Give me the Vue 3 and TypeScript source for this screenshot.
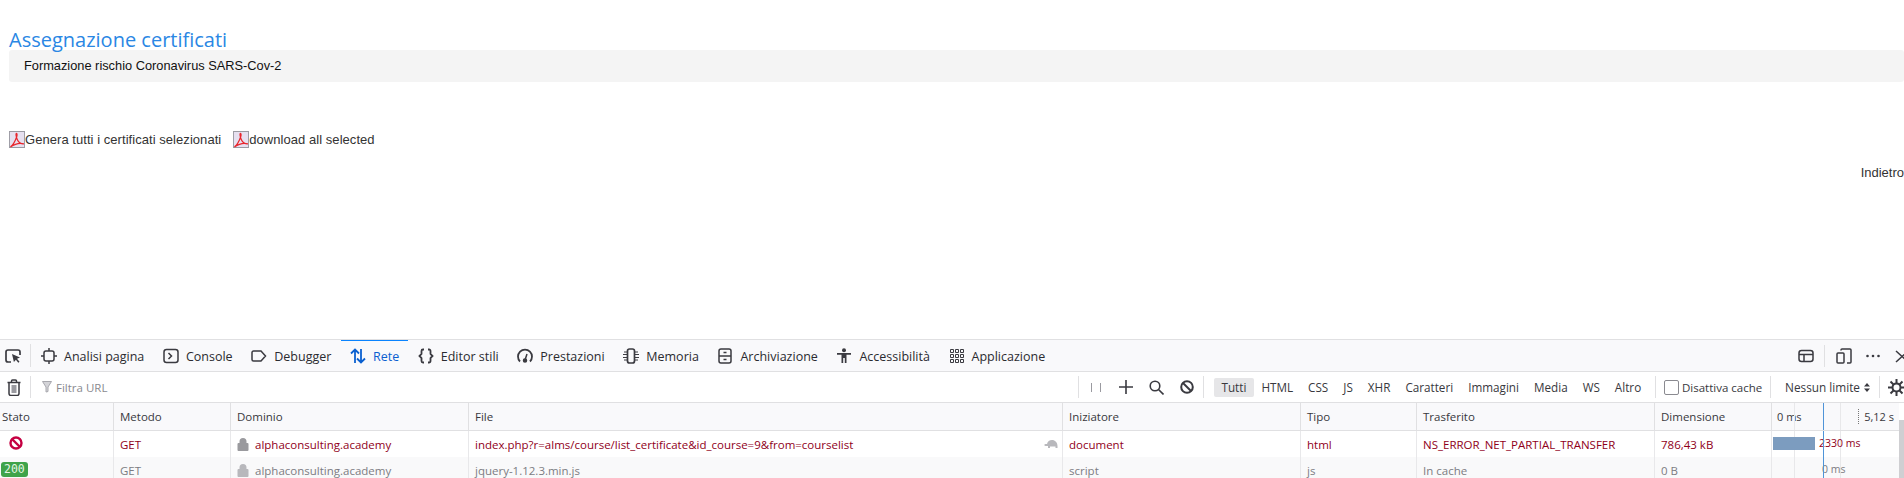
<template>
  <div class="page">
    <div class="content">
      <h1 class="title">Assegnazione certificati</h1>
      <div class="course">Formazione rischio Coronavirus SARS-Cov-2</div>
      <div class="actions">
        <a class="action" v-for="a in actions" :key="a">
          <svg class="pdf" width="16" height="17" viewBox="0 0 17 17" preserveAspectRatio="none">
            <rect x="0.5" y="0.5" width="16" height="16" fill="#e6e0f0" stroke="#9a9aa2" />
            <path d="M8 2.5c-.9 0-.7 2.6.8 6 1.2 2.6 3 4.6 7 4.4-3.6-1.2-9-.4-14.300 3 3-2 5.500-7 6.800-10.500.4-1.300.4-2.900-.3-2.900z" fill="none" stroke="#e8262d" stroke-width="1.300" />
          </svg>{{ a }}
        </a>
      </div>
      <div class="back"><a>Indietro</a></div>
    </div>

    <div class="devtools">
      <div class="tabbar">
        <div class="picker">
          <svg width="16" height="16" viewBox="0 0 16 16" fill="none" stroke="#3a3a40" stroke-width="1.700">
            <path d="M6 14H3a2 2 0 0 1-2-2V4a2 2 0 0 1 2-2h10a2 2 0 0 1 2 2v3" />
            <path d="M7 6l8 3.500-3 1.200 2.500 3-1.200 1-2.400-3-2 2.300z" fill="#3a3a40" stroke="none" />
          </svg>
        </div>
        <div class="tabs">
          <div v-for="t in tabs" :key="t.label" class="tab" :class="{ active: t.active }">
            <svg width="16" height="16" viewBox="0 0 16 16" fill="none" stroke="currentColor" stroke-width="1.500" v-html="t.icon"></svg>
            <span>{{ t.label }}</span>
          </div>
        </div>
        <div class="tabbar-right">
          <svg width="16" height="16" viewBox="0 0 16 16" fill="none" stroke="#3a3a40" stroke-width="1.500">
            <rect x="1" y="2.500" width="14" height="11" rx="2.500" />
            <path d="M1 6.500h14M6 6.500v7" />
          </svg>
          <span class="vsep"></span>
          <svg class="split" width="16" height="16" viewBox="0 0 16 16" fill="none" stroke="#3a3a40" stroke-width="1.500">
            <rect x="1" y="5" width="7" height="10" rx="1" />
            <path d="M5 2.500V2a1 1 0 0 1 1-1h8a1 1 0 0 1 1 1v12a1 1 0 0 1-1 1h-3" />
          </svg>
          <svg class="dots" width="16" height="16" viewBox="0 0 16 16" fill="#3a3a40">
            <circle cx="2.500" cy="8" r="1.300" /><circle cx="8" cy="8" r="1.300" /><circle cx="13.500" cy="8" r="1.300" />
          </svg>
          <svg class="close" width="14" height="14" viewBox="0 0 14 14" stroke="#3a3a40" stroke-width="1.500">
            <path d="M1 2l12 11M13 2L1 13" />
          </svg>
        </div>
      </div>

      <div class="toolbar">
        <div class="trash">
          <svg width="16" height="17" viewBox="0 0 16 17" fill="none" stroke="#3a3a40" stroke-width="1.500">
            <path d="M1.500 3.500h13M5.500 3.500V2a1 1 0 0 1 1-1h3a1 1 0 0 1 1 1v1.500" />
            <path d="M3 3.500v11a2 2 0 0 0 2 2h6a2 2 0 0 0 2-2v-11" />
            <rect x="5.500" y="6" width="5" height="8" fill="#9a9aa0" stroke="none" />
          </svg>
        </div>
        <div class="filter">
          <svg width="10" height="12" viewBox="0 0 10 12" fill="none" stroke="#a8a8ae" stroke-width="1">
            <path d="M.5 .500h9L6 6v4.500L4 11V6z" fill="#d4d4d8" />
          </svg>
          <span>Filtra URL</span>
        </div>
        <div class="tools">
          <span class="pause"></span>
          <svg class="plus" width="14" height="14" viewBox="0 0 14 14" stroke="#3a3a40" stroke-width="1.600"><path d="M7 0v14M0 7h14" /></svg>
          <svg width="15" height="15" viewBox="0 0 15 15" fill="none" stroke="#3a3a40" stroke-width="1.600">
            <circle cx="6" cy="6" r="4.800" /><path d="M9.500 9.500L14.500 14.500" />
          </svg>
          <svg width="14" height="14" viewBox="0 0 14 14" fill="none" stroke="#3a3a40" stroke-width="2">
            <circle cx="7" cy="7" r="5.800" /><path d="M3 3l8 8" />
          </svg>
        </div>
        <div class="types">
          <span v-for="(t, i) in types" :key="t" class="type" :class="{ on: i === 0 }">{{ t }}</span>
        </div>
        <label class="cache"><span class="box"></span>Disattiva cache</label>
        <div class="throttle">
          <span>Nessun limite</span>
          <svg width="6" height="9" viewBox="0 0 6 9" fill="#3a3a40"><path d="M3 0l3 3.500H0zM3 9L0 5.500h6z" /></svg>
        </div>
        <div class="gear">
          <svg width="17" height="17" viewBox="0 0 17 17" fill="none" stroke="#3a3a40">
            <circle cx="8.500" cy="8.500" r="4" stroke-width="2" />
            <path d="M8.500 0v4M8.500 13v4M0 8.500h4M13 8.500h4M2.500 2.500l3 3M11.500 11.500l3 3M14.500 2.500l-3 3M5.500 11.500l-3 3" stroke-width="2" />
          </svg>
        </div>
      </div>

      <div class="grid head">
        <div v-for="h in heads" :key="h" class="cell">{{ h }}</div>
        <div class="cell wf-head">
          <span>0 ms</span>
          <span class="tick"></span>
          <span class="tick second"></span>
          <span class="line"></span>
          <span class="wf-end">5,12 s</span>
        </div>
      </div>

      <div v-for="r in rows" :key="r.file" class="grid row" :class="r.cls">
        <div class="cell status">
          <svg v-if="r.blocked" class="blocked" width="14" height="14" viewBox="0 0 14 14" fill="none" stroke="#c50042" stroke-width="2.400">
            <circle cx="7" cy="7" r="5.500" /><path d="M3 3l8 8" />
          </svg>
          <span v-else class="code">200</span>
        </div>
        <div class="cell">GET</div>
        <div class="cell domain">
          <svg width="12" height="14" viewBox="0 0 12 14" :fill="r.lock">
            <path d="M2.500 6V4.500a3.500 3.500 0 0 1 7 0V6h1a1 1 0 0 1 1 1v6a1 1 0 0 1-1 1h-9a1 1 0 0 1-1-1V7a1 1 0 0 1 1-1z" />
          </svg>
          <span>alphaconsulting.academy</span>
        </div>
        <div class="cell file">
          <span>{{ r.file }}</span>
          <svg v-if="r.blocked" class="turtle" width="14" height="9" viewBox="0 0 14 9" fill="#b8b8bc">
            <path d="M4 8V6H1.500C0 6 0 4 1.500 4H3c.5-2.500 2.500-4 5-4 3 0 5.500 2.500 5.500 6v2h-2V6.500H6V8z" />
          </svg>
        </div>
        <div class="cell">{{ r.init }}</div>
        <div class="cell">{{ r.type }}</div>
        <div class="cell">{{ r.transfer }}</div>
        <div class="cell">{{ r.size }}</div>
        <div class="cell wf">
          <span class="tick"></span>
          <span class="tick second"></span>
          <span v-if="r.bar" class="bar" :style="{ width: r.bar + 'px' }"></span>
          <span class="time" :style="{ left: r.timeLeft + 'px' }">{{ r.time }}</span>
          <span class="line"></span>
        </div>
      </div>
      <div class="scrollbar"></div>
    </div>
  </div>
</template>

<script setup lang="ts">
const actions = ['Genera tutti i certificati selezionati', 'download all selected']

const tabs = [
  { label: 'Analisi pagina', icon: '<rect x="3" y="3" width="10" height="10" rx="2"/><path d="M8 0v3M8 13v3M0 8h3M13 8h3"/>' },
  { label: 'Console', icon: '<rect x="1" y="1.500" width="14" height="13" rx="2.500"/><path d="M5.500 5l3 3-3 3"/>' },
  { label: 'Debugger', icon: '<path d="M2.500 3h7.500l4.500 5-4.500 5H2.500a1.500 1.500 0 0 1-1.500-1.500v-7A1.500 1.500 0 0 1 2.500 3z"/>' },
  { label: 'Rete', active: true, icon: '<path stroke-width="1.800" d="M5 15V1.500M1 5.500l4-4 4 4M11 1v13.500M7 10.500l4 4 4-4"/>' },
  { label: 'Editor stili', icon: '<path stroke-width="1.800" d="M6 1.500H5a1.500 1.500 0 0 0-1.500 1.500v3L1.500 8l2 2v3A1.500 1.500 0 0 0 5 14.500h1M10 1.500h1A1.500 1.500 0 0 1 12.500 3v3l2 2-2 2v3a1.500 1.500 0 0 1-1.500 1.500h-1"/>' },
  { label: 'Prestazioni', icon: '<path stroke-width="1.800" d="M3 13.500A7 7 0 1 1 13 13.500"/><path d="M10 6l-2 6"/><circle cx="8" cy="12.500" r="1.500" fill="currentColor"/>' },
  { label: 'Memoria', icon: '<rect x="4.500" y="1" width="7" height="14" rx="2" stroke-width="1.700"/><path stroke-width="1" d="M1 4h3M0 6.500h4M0 9.500h4M1 12h3M12 4h3M12 6.500h4M12 9.500h4M12 12h3"/>' },
  { label: 'Archiviazione', icon: '<rect x="2" y="1" width="12" height="14" rx="2"/><path d="M2 8h12M6.500 4.500h3M6.500 11.500h3"/>' },
  { label: 'Accessibilità', icon: '<circle cx="8" cy="2.200" r="2" fill="currentColor" stroke="none"/><path fill="currentColor" stroke="none" d="M1 5h14v1.800h-4.500V15H8.800v-5H7.200v5H5.500V6.800H1z"/>' },
  { label: 'Applicazione', icon: '<path stroke-width="1" d="M1.500 1.500h3v3h-3zM6.500 1.500h3v3h-3zM11.500 1.500h3v3h-3zM1.500 6.500h3v3h-3zM6.500 6.500h3v3h-3zM11.500 6.500h3v3h-3zM1.500 11.500h3v3h-3zM6.500 11.500h3v3h-3zM11.500 11.500h3v3h-3z"/>' },
]

const types = ['Tutti', 'HTML', 'CSS', 'JS', 'XHR', 'Caratteri', 'Immagini', 'Media', 'WS', 'Altro']
const heads = ['Stato', 'Metodo', 'Dominio', 'File', 'Iniziatore', 'Tipo', 'Trasferito', 'Dimensione']

const rows = [
  {
    cls: 'error',
    blocked: true,
    lock: '#9a9a9e',
    file: 'index.php?r=alms/course/list_certificate&id_course=9&from=courselist',
    init: 'document',
    type: 'html',
    transfer: 'NS_ERROR_NET_PARTIAL_TRANSFER',
    size: '786,43 kB',
    bar: 42,
    timeLeft: 47,
    time: '2330 ms',
  },
  {
    cls: 'cached',
    blocked: false,
    lock: '#b8b8bc',
    file: 'jquery-1.12.3.min.js',
    init: 'script',
    type: 'js',
    transfer: 'In cache',
    size: '0 B',
    bar: 0,
    timeLeft: 50,
    time: '0 ms',
  },
]
</script>

<style scoped>
.page {
  width: 1904px;
  height: 478px;
  overflow: hidden;
  display: flex;
  flex-direction: column;
  background: #fff;
}
.content {
  height: 339px;
  flex: none;
  padding: 29px 0 0 9px;
  box-sizing: border-box;
  font-family: "Liberation Sans", Arial, sans-serif;
  font-size: 13px;
  color: #333;
}
.title {
  margin: 0;
  font-family: "Open Sans", sans-serif;
  font-size: 20px;
  font-weight: 400;
  line-height: 22px;
  color: #2a87e4;
}
.course {
  height: 32px;
  line-height: 32px;
  margin-top: -1px;
  padding-left: 15px;
  background: #f4f4f4;
  border-radius: 3px;
  color: #111;
  font-size: 12.800px;
}
.actions {
  display: flex;
  gap: 12px;
  margin-top: 49px;
  height: 17px;
}
.action {
  display: flex;
  align-items: center;
  letter-spacing: 0.05px;
}
.pdf {
  flex: none;
}
.back {
  margin-top: 17px;
  text-align: right;
}

.devtools {
  position: relative;
  flex: 1;
  overflow: hidden;
  border-top: 1px solid #e0e0e2;
  font-family: "Open Sans", "Noto Sans", sans-serif;
  font-size: 11.500px;
  color: #38383d;
  background: #fff;
}
.tabbar {
  display: flex;
  align-items: stretch;
  height: 31px;
  background: #f9f9fb;
  border-bottom: 1px solid #e0e0e2;
}
.picker {
  width: 31px;
  display: flex;
  align-items: center;
  justify-content: center;
  box-sizing: border-box;
  padding-right: 4px;
  border-right: 1px solid #e0e0e2;
  margin: 4px 0;
}
.tabs {
  display: flex;
  margin-left: 0.700px;
  font-size: 12.500px;
}
.tab {
  display: flex;
  align-items: center;
  gap: 7px;
  padding: 0 9.300px;
  color: #2b2b30;
  border-top: 2px solid transparent;
  margin-top: -1px;
}
.tab svg {
  flex: none;
  color: #3a3a40;
}
.tab.active {
  color: #0a60d0;
  border-top-color: #0a84ff;
}
.tab.active svg {
  color: #0a60d0;
}
.tabbar-right {
  margin-left: auto;
  margin-right: -5px;
  display: flex;
  align-items: center;
}
.vsep {
  width: 1px;
  height: 22px;
  margin-left: 10px;
  background: #e0e0e2;
}
.split {
  margin-left: 11px;
}
.dots {
  margin-left: 13px;
}
.close {
  margin-left: 14px;
}

.toolbar {
  display: flex;
  align-items: center;
  height: 30px;
  border-bottom: 1px solid #e0e0e2;
}
.trash {
  width: 31px;
  height: 22px;
  box-sizing: border-box;
  border-right: 1px solid #e0e0e2;
  padding-right: 3px;
  display: flex;
  align-items: center;
  justify-content: center;
}
.filter {
  flex: 1;
  display: flex;
  align-items: center;
  gap: 4px;
  padding-left: 11px;
  color: #8a8a90;
}
.tools {
  display: flex;
  align-items: center;
  gap: 16px;
  height: 22px;
  width: 126px;
  box-sizing: border-box;
  padding-left: 12px;
  border-left: 1px solid #e0e0e2;
  border-right: 1px solid #e0e0e2;
}
.pause {
  width: 8px;
  height: 9px;
  border-left: 1px solid #9a9aa0;
  border-right: 1px solid #9a9aa0;
}
.plus {
  margin-left: 2px;
}
.types {
  display: flex;
  align-items: center;
  width: 451px;
  padding-left: 10px;
  box-sizing: border-box;
}
.type {
  padding: 0 7.500px;
  height: 19px;
  line-height: 19px;
  border-radius: 2px;
  color: #38383d;
  font-size: 11.700px;
}
.type.on {
  background: #e6e6e8;
}
.cache {
  display: flex;
  align-items: center;
  gap: 3px;
  height: 22px;
  width: 115px;
  padding-left: 8px;
  box-sizing: border-box;
  border-left: 1px solid #e0e0e2;
  white-space: nowrap;
  font-size: 11.500px;
}
.box {
  width: 15px;
  height: 15px;
  box-sizing: border-box;
  border: 1px solid #8a8a90;
  border-radius: 2px;
  flex: none;
}
.throttle {
  display: flex;
  align-items: center;
  gap: 4px;
  width: 110px;
  height: 22px;
  box-sizing: border-box;
  padding-left: 14px;
  border-left: 1px solid #e0e0e2;
  border-right: 1px solid #e0e0e2;
  white-space: nowrap;
  font-size: 11.800px;
}
.gear {
  box-sizing: border-box;
  padding-left: 8px;
  width: 24px;
  overflow: hidden;
  display: flex;
}
.gear svg {
  flex: none;
}

.grid {
  display: grid;
  grid-template-columns: 114px 117px 238px 594px 238px 116px 238px 117px 127px;
  width: 1899px;
}
.cell {
  padding-left: 6px;
  white-space: nowrap;
  overflow: hidden;
  display: flex;
  align-items: center;
  box-sizing: border-box;
}
.head {
  height: 28px;
  background: #f9f9fb;
  border-bottom: 1px solid #e0e0e2;
  box-sizing: border-box;
}
.head .cell {
  border-right: 1px solid #e0e0e2;
}
.head .cell:first-child {
  padding-left: 2px;
}
.row {
  height: 26px;
}
.row.error {
  color: #90001a;
  background: #fff;
}
.row.cached {
  color: #7c7c82;
  background: #f9f9fa;
}
.row .cell {
  height: 100%;
  border-right: 1px solid #e8e8ea;
}
.row .status {
  padding-left: 2px;
}
.blocked {
  margin-left: 7px;
  margin-top: -3px;
}
.code {
  background: #3fa34a;
  color: #e4f5e4;
  border-radius: 3px;
  font-family: "DejaVu Sans Mono", monospace;
  font-size: 11.500px;
  line-height: 15px;
  padding: 0 3px;
  margin: -1px 0 0 -1px;
}
.domain {
  gap: 6px;
}
.file {
  position: relative;
}
.turtle {
  position: absolute;
  right: 4px;
  top: 9px;
}
.wf-head {
  position: relative;
  border-right: none !important;
  justify-content: flex-start;
  padding-left: 5px;
  font-size: 11px;
}
.wf-end {
  position: absolute;
  right: 5px;
  top: 6px;
  padding-left: 5px;
  border-left: 1px dotted #777;
}
.wf {
  position: relative;
  padding-left: 0;
  border-right: none !important;
  font-size: 10.500px;
}
.tick {
  position: absolute;
  left: 22px;
  top: 0;
  bottom: 0;
  width: 1px;
  background: #e8e8ea;
}
.tick.second {
  left: 68px;
}
.bar {
  position: absolute;
  left: 1px;
  top: 6px;
  height: 13px;
  background: #7c9cbf;
}
.time {
  position: absolute;
  top: 5px;
}
.line {
  position: absolute;
  left: 51px;
  top: 0;
  bottom: 0;
  width: 1px;
  background: #4f94d8;
}
.scrollbar {
  position: absolute;
  right: 0;
  top: 80px;
  width: 5px;
  height: 58px;
  background: #cfcfd2;
}
</style>
